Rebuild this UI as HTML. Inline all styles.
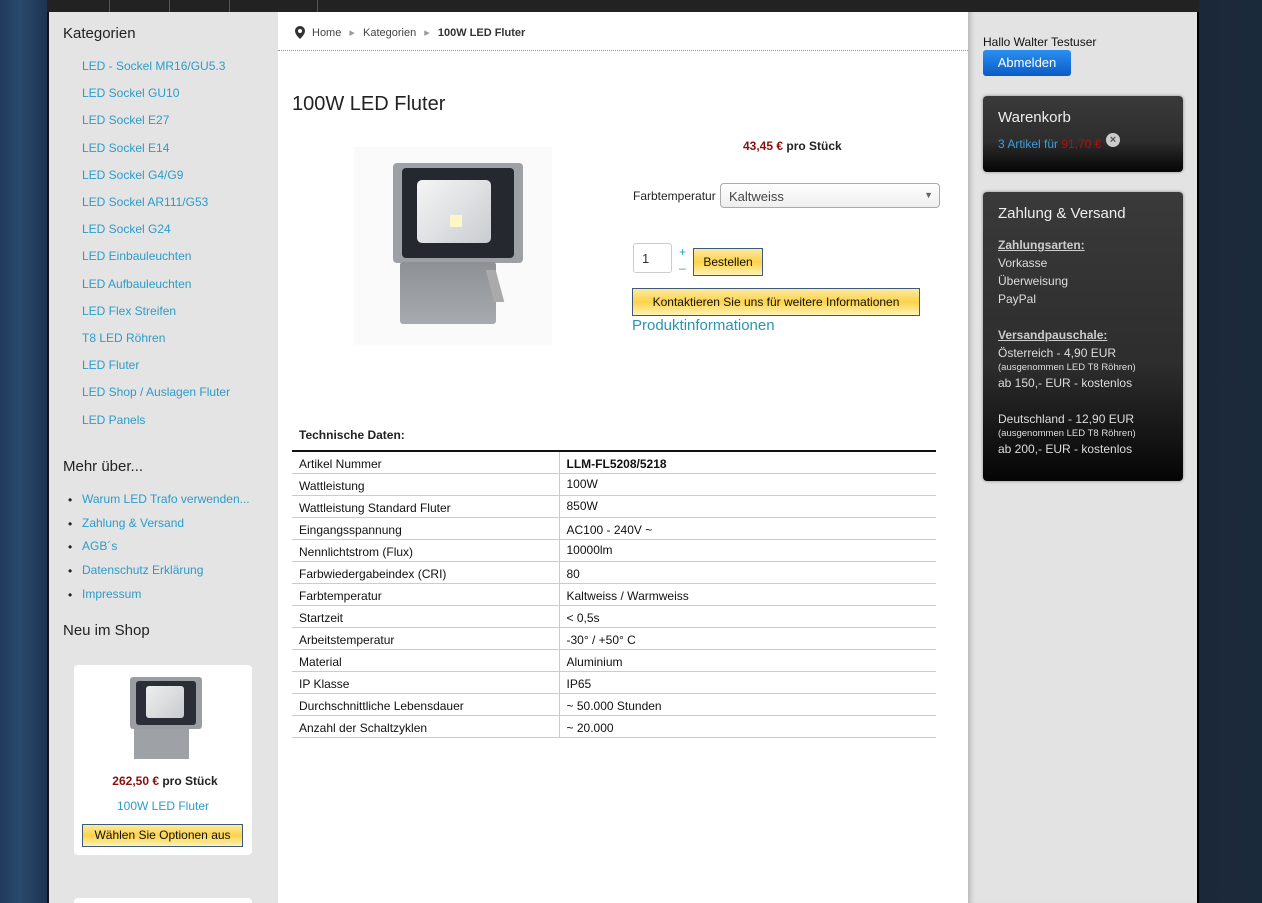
<!DOCTYPE html>
<html><head><meta charset="utf-8"><style>
*{margin:0;padding:0;box-sizing:border-box}
html,body{width:1262px;height:903px;overflow:hidden}
body{position:relative;font-family:"Liberation Sans",Arial,sans-serif;font-size:12px;color:#222;background:linear-gradient(90deg,#1e3a5c 0,#2a4a6c 20px,#1e3350 47px,#1b2839 1200px,#1b2a3b 1262px)}
.a{position:absolute}
#top{left:47px;top:0;width:1152px;height:12px;background:#222}
#top i{position:absolute;top:0;width:1px;height:12px;background:#555}
#left{left:47px;top:12px;width:231px;height:891px;background:#e4e4e4;border-left:2px solid #111}
#main{left:278px;top:12px;width:690px;height:891px;background:#fff}
#right{left:968px;top:12px;width:231px;height:891px;background:#e3e3e3;border-right:2px solid #000;box-shadow:inset 6px 0 5px -3px #bbb}
.h{font-size:15px;color:#222}
.lk{color:#2b9cc8;font-size:12px}
.box{background:linear-gradient(#3a3a3a,#2d2d2d 60%,#050505);border-radius:4px;box-shadow:0 0 3px #888;color:#ddd}
.btn{background:linear-gradient(#fde9a0,#fcd34a 50%,#fff2b5);border:1px solid #3d5a7a;color:#111;text-align:center}
table{border-collapse:collapse;font-size:12px;color:#111}
td{height:22px;border-bottom:1px solid #ccc;padding:4px 7px 0}
td+td{border-left:1px solid #ccc}
</style></head><body>
<div id="top" class="a"><i style="left:62px"></i><i style="left:122px"></i><i style="left:182px"></i><i style="left:270px"></i></div>
<div id="left" class="a"></div>
<div id="main" class="a"></div>
<div id="right" class="a"></div>

<div class="a h" style="left:63px;top:25px">Kategorien</div>
<div class="a lk" style="left:82px;top:53px;line-height:27.2px">LED - Sockel MR16/GU5.3<br>LED Sockel GU10<br>LED Sockel E27<br>LED Sockel E14<br>LED Sockel G4/G9<br>LED Sockel AR111/G53<br>LED Sockel G24<br>LED Einbauleuchten<br>LED Aufbauleuchten<br>LED Flex Streifen<br>T8 LED Röhren<br>LED Fluter<br>LED Shop / Auslagen Fluter<br>LED Panels</div>
<div class="a h" style="left:63px;top:458px">Mehr über...</div>
<div class="a lk" style="left:82px;top:488px;line-height:23.7px">Warum LED Trafo verwenden...<br>Zahlung &amp; Versand<br>AGB´s<br>Datenschutz Erklärung<br>Impressum</div>
<div class="a" style="left:68px;top:489px;line-height:23.7px;font-size:12px">•<br>•<br>•<br>•<br>•</div>
<div class="a h" style="left:63px;top:622px">Neu im Shop</div>
<div class="a" style="left:74px;top:665px;width:178px;height:190px;background:#fff;border-radius:4px"></div>
<div class="a" style="left:74px;top:898px;width:178px;height:5px;background:#fff;border-radius:4px 4px 0 0"></div>
<!-- small lamp -->
<div class="a" style="left:130px;top:677px;width:72px;height:52px;background:#9a9ea3;border-radius:3px"></div>
<div class="a" style="left:136px;top:681px;width:60px;height:44px;background:#2b2e36;border-radius:3px"></div>
<div class="a" style="left:146px;top:686px;width:38px;height:32px;background:linear-gradient(135deg,#eee,#c8ccd0);border-radius:3px"></div>
<div class="a" style="left:134px;top:729px;width:55px;height:30px;background:#9ea2a6"></div>
<div class="a" style="left:110px;top:774px;width:110px;text-align:center;font-weight:bold;font-size:12px"><span style="color:#8b0e0e">262,50 €</span> pro Stück</div>
<div class="a lk" style="left:74px;top:799px;width:178px;text-align:center">100W LED Fluter</div>
<div class="a btn" style="left:82px;top:824px;width:161px;height:23px;line-height:21px;font-size:12px">Wählen Sie Optionen aus</div>

<!-- breadcrumb -->
<svg class="a" style="left:295px;top:26px" width="10" height="13" viewBox="0 0 10 13"><path d="M5 0C2.2 0 0 2.2 0 5c0 3.5 5 8 5 8s5-4.5 5-8C10 2.2 7.8 0 5 0zm0 7a2 2 0 110-4 2 2 0 010 4z" fill="#333"/></svg>
<div class="a" style="left:312px;top:26px;font-size:11px;color:#444">Home <span style="color:#999;margin:0 5px">▸</span> Kategorien <span style="color:#999;margin:0 5px">▸</span> <b style="color:#333">100W LED Fluter</b></div>
<div class="a" style="left:278px;top:50px;width:690px;border-top:1px dotted #999"></div>
<div class="a" style="left:292px;top:93px;font-size:20px;color:#222">100W LED Fluter</div>

<!-- big lamp -->
<div class="a" style="left:354px;top:147px;width:198px;height:198px;background:#fafafa"></div>
<div class="a" style="left:393px;top:163px;width:130px;height:100px;background:#9da1a5;border-radius:4px"></div>
<div class="a" style="left:402px;top:168px;width:112px;height:90px;background:#25282f;border-radius:4px"></div>
<div class="a" style="left:417px;top:180px;width:74px;height:63px;background:linear-gradient(135deg,#f5f5f5,#c9cdd1);border-radius:5px"></div>
<div class="a" style="left:450px;top:215px;width:12px;height:12px;background:#fff6c8"></div>
<div class="a" style="left:400px;top:262px;width:96px;height:62px;background:linear-gradient(#8d9196,#a7abaf);border-radius:3px"></div>
<div class="a" style="left:490px;top:270px;width:10px;height:32px;background:#aaa;transform:skewX(15deg)"></div>

<div class="a" style="left:743px;top:139px;font-size:12px;font-weight:bold"><span style="color:#8b0e0e">43,45 €</span> pro Stück</div>
<div class="a" style="left:633px;top:189px;font-size:12px">Farbtemperatur</div>
<div class="a" style="left:720px;top:183px;width:220px;height:25px;border:1px solid #aaa;border-radius:4px;background:linear-gradient(#fff,#eee);font-size:13px;color:#444;padding:5px 8px">Kaltweiss<span style="position:absolute;right:6px;top:6px;font-size:9px;color:#666">▼</span></div>
<div class="a" style="left:633px;top:243px;width:39px;height:30px;border:1px solid #ccc;border-radius:3px;padding:7px 8px;font-size:13px;color:#333">1</div>
<div class="a" style="left:679px;top:244px;color:#2b9cc8;font-size:12px;line-height:16px">+<br>–</div>
<div class="a btn" style="left:693px;top:248px;width:70px;height:28px;line-height:27px;font-size:12px">Bestellen</div>
<div class="a btn" style="left:632px;top:288px;width:288px;height:28px;line-height:27px;font-size:12px">Kontaktieren Sie uns für weitere Informationen</div>
<div class="a" style="left:632px;top:317px;font-size:15px;color:#2996b0">Produktinformationen</div>

<div class="a" style="left:299px;top:428px;font-weight:bold;font-size:12px">Technische Daten:</div>
<table class="a" style="left:292px;top:450px;width:644px;border-top:2px solid #111">
<tr><td style="width:267px">Artikel Nummer</td><td><b>LLM-FL5208/5218</b></td></tr>
<tr><td>Wattleistung</td><td style="padding-top:0">100W</td></tr>
<tr><td>Wattleistung Standard Fluter</td><td style="padding-top:0">850W</td></tr>
<tr><td>Eingangsspannung</td><td>AC100 - 240V ~</td></tr>
<tr><td>Nennlichtstrom (Flux)</td><td style="padding-top:0">10000lm</td></tr>
<tr><td>Farbwiedergabeindex (CRI)</td><td>80</td></tr>
<tr><td>Farbtemperatur</td><td>Kaltweiss / Warmweiss</td></tr>
<tr><td>Startzeit</td><td>&lt; 0,5s</td></tr>
<tr><td>Arbeitstemperatur</td><td>-30° / +50° C</td></tr>
<tr><td>Material</td><td>Aluminium</td></tr>
<tr><td>IP Klasse</td><td>IP65</td></tr>
<tr><td>Durchschnittliche Lebensdauer</td><td>~ 50.000 Stunden</td></tr>
<tr><td>Anzahl der Schaltzyklen</td><td>~ 20.000</td></tr>
</table>

<!-- right -->
<div class="a" style="left:983px;top:35px;font-size:12px;color:#111">Hallo Walter Testuser</div>
<div class="a" style="left:983px;top:50px;width:88px;height:26px;background:linear-gradient(#2a8ff0,#0a5cc8);border-radius:3px;color:#fff;font-size:13px;line-height:25px;text-align:center">Abmelden</div>
<div class="a box" style="left:983px;top:96px;width:200px;height:76px"></div>
<div class="a" style="left:998px;top:109px;font-size:15px;color:#eee">Warenkorb</div>
<div class="a" style="left:998px;top:137px;font-size:12px;color:#3b9ee0">3 Artikel für <span style="color:#b01010">91,70 €</span></div>
<div class="a" style="left:1106px;top:133px;width:14px;height:14px;border-radius:50%;background:#ccc;color:#555;font-size:11px;line-height:14px;text-align:center;font-weight:bold">×</div>
<div class="a box" style="left:983px;top:192px;width:200px;height:289px"></div>
<div class="a" style="left:998px;top:205px;font-size:15px;color:#eee">Zahlung &amp; Versand</div>
<div class="a" style="left:998px;top:236px;font-size:12px;line-height:18px;color:#ddd"><b style="text-decoration:underline;color:#ccc">Zahlungsarten:</b><br>Vorkasse<br>Überweisung<br>PayPal<br><br><b style="text-decoration:underline;color:#ccc">Versandpauschale:</b><br>Österreich - 4,90 EUR<br><span style="font-size:9.5px;line-height:12px;display:block">(ausgenommen LED T8 Röhren)</span>ab 150,- EUR - kostenlos<br><br>Deutschland - 12,90 EUR<br><span style="font-size:9.5px;line-height:12px;display:block">(ausgenommen LED T8 Röhren)</span>ab 200,- EUR - kostenlos</div>
</body></html>
